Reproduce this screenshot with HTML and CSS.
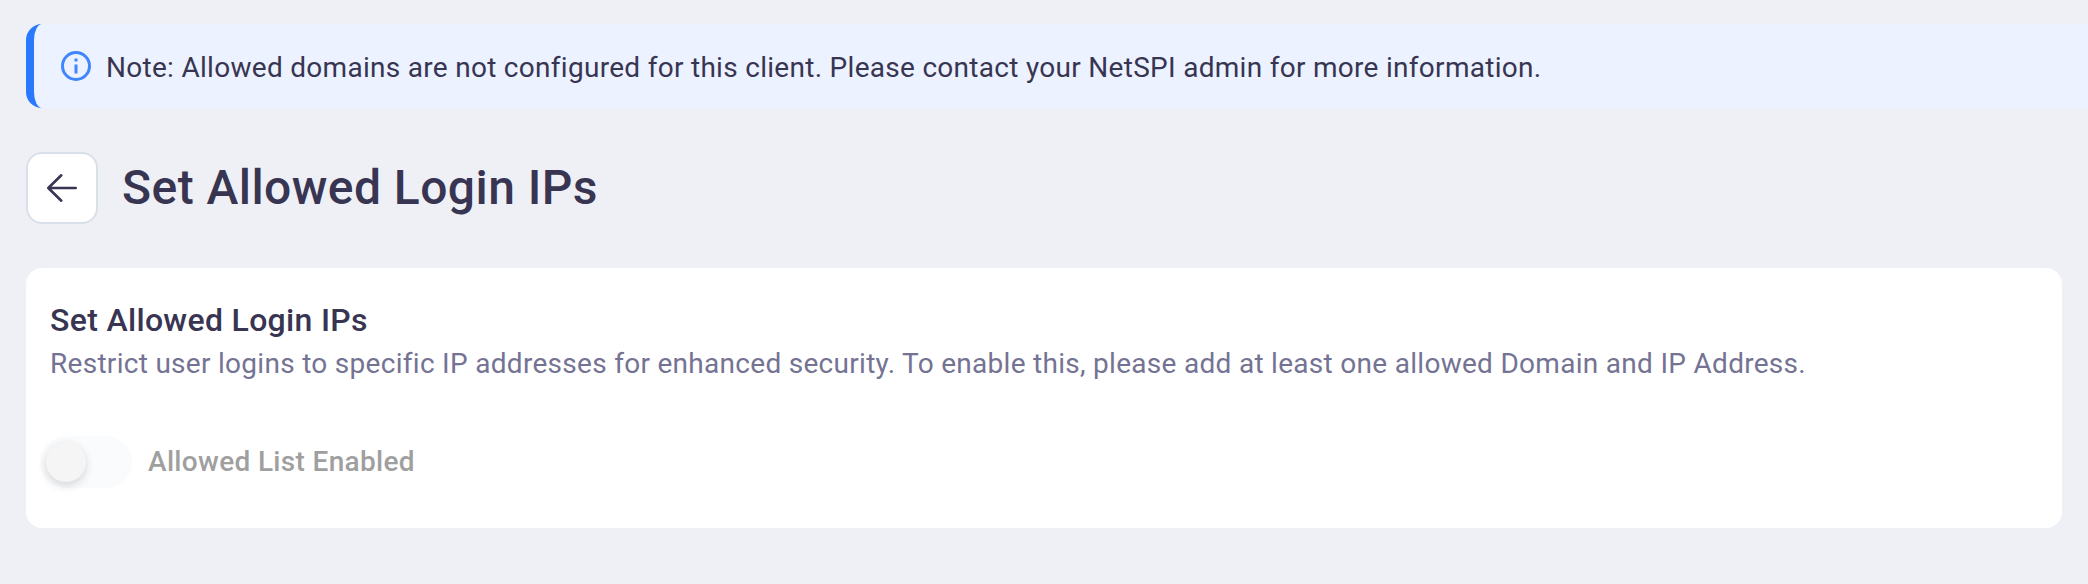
FILE: index.html
```html
<!DOCTYPE html>
<html lang="en"><head><meta charset="utf-8"><title>Set Allowed Login IPs</title><link rel="stylesheet" href="styles.css"></head>
<body>
<div class="note">
<svg class="note-icon" viewBox="0 0 32 32" fill="none" stroke="currentColor" stroke-width="3"><circle cx="16" cy="16" r="13.5"/><path d="M16 14.5v9M16 8.5v3"/></svg>
<span class="note-text">Note: Allowed domains are not configured for this client. Please contact your NetSPI admin for more information.</span>
</div>
<header class="heading">
<button class="back" aria-label="Back"><svg class="back-icon" viewBox="0 0 32 32" fill="none" stroke="currentColor" stroke-width="2.6" stroke-linecap="round" stroke-linejoin="round"><path d="M29.7 16H2.3M15.3 3.3L2.3 16l13 12.7"/></svg></button>
<h1 class="title">Set Allowed Login IPs</h1>
</header>
<main class="card">
<h2 class="card-title">Set Allowed Login IPs</h2>
<p class="desc">Restrict user logins to specific IP addresses for enhanced security. To enable this, please add at least one allowed Domain and IP Address.</p>
<div class="toggle"><span class="track"><span class="thumb"></span></span><span class="toggle-label">Allowed List Enabled</span></div>
</main>
</body></html>
```
FILE: styles.css
```css
* { box-sizing: border-box; }
body { margin: 0; padding: 24px 0 0 26px; height: 584px; overflow: hidden; background: #eff0f6; color: #383552; font-family: Roboto, sans-serif; }
.note { display: flex; align-items: center; gap: 14px; height: 84px; padding-left: 26px; border-left: 8px solid #2979ff; border-radius: 16px 0 0 16px; background: #ecf2ff; font-size: 28px; letter-spacing: 0.29px; white-space: nowrap; }
.note-icon { width: 32px; height: 32px; color: #3f86ff; }
.note-text { padding-top: 2px; }
.heading { display: flex; align-items: center; gap: 24px; height: 72px; margin-top: 44px; }
.back { display: flex; align-items: center; justify-content: center; width: 72px; height: 72px; padding: 0; border: 2px solid #d8e0e9; border-radius: 16px; background: #fff; color: #383552; }
.back-icon { width: 32px; height: 32px; }
.title { margin: 0; padding-bottom: 2px; font-size: 48px; font-weight: 500; letter-spacing: 0.44px; white-space: nowrap; }
.card { width: 2036px; height: 260px; margin-top: 44px; padding: 32px 24px; border-radius: 16px; background: #fff; }
.card-title { margin: 0; font-size: 32px; line-height: 40px; font-weight: 500; letter-spacing: 0.32px; }
.desc { margin: 2px 0 0; font-size: 28px; line-height: 44px; letter-spacing: 0.29px; color: #747393; white-space: nowrap; }
.toggle { display: flex; align-items: center; gap: 16px; margin: 50px 0 0 -10px; }
.track { display: flex; align-items: center; width: 92px; height: 52px; padding-left: 6px; border-radius: 26px; background: #fafbfd; }
.thumb { width: 40px; height: 40px; border-radius: 50%; background: #f5f5f5; box-shadow: 0 4px 10px rgba(0,0,0,.13), 0 0 8px rgba(0,0,0,.03); }
.toggle-label { padding-bottom: 2px; color: #9f9f9f; font-size: 28px; font-weight: 500; letter-spacing: 0.33px; }
```
